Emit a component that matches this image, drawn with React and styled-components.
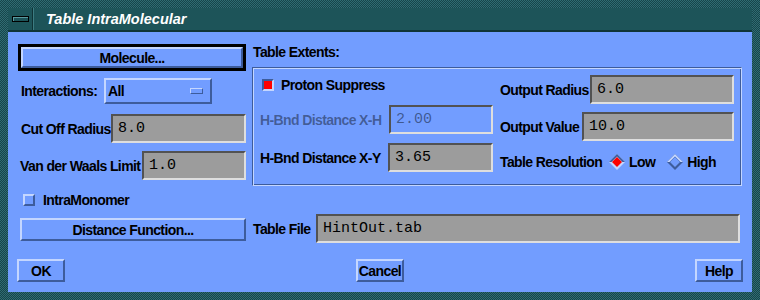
import React from "react";
import styled, { createGlobalStyle, css } from "styled-components";

const BG = "#729dff";
const LIGHT = "#c4d6ff";
const DARK = "#3d5c9c";
const FIELD = "#9c9c9c";
const FIELD_DARK = "#525252";
const FIELD_LIGHT = "#dedede";

const Global = createGlobalStyle`
  body {
    margin: 0;
    background: #000;
  }
`;

const raised = css`
  border: 2px solid;
  border-color: ${LIGHT} ${DARK} ${DARK} ${LIGHT};
`;

const uiText = css`
  font-weight: bold;
  font-size: 14px;
  letter-spacing: -0.6px;
`;

const Window = styled.div`
  width: 760px;
  height: 300px;
  box-sizing: border-box;
  padding: 8px;
  display: flex;
  flex-direction: column;
  background: repeating-conic-gradient(#17454a 0 25%, #2f6b72 0 50%) 0 0 / 2px 2px;
  font-family: "Liberation Sans", Arial, sans-serif;
`;

const TitleBar = styled.div`
  height: 22px;
  display: flex;
  align-items: stretch;
  background: #1d5459;
  border-bottom: 2px solid #103538;
`;

const MenuButton = styled.div`
  width: 24px;
  display: flex;
  align-items: center;
  justify-content: center;
  border-right: 1px solid #0f3336;
  box-shadow: 1px 0 0 #3c7c82;
`;

const MenuBar = styled.div`
  width: 15px;
  height: 4px;
  background: #1d5459;
  border: 1px solid #000;
  box-shadow: inset 1px 1px 0 #5a9aa0;
`;

const Title = styled.div`
  padding-left: 13px;
  display: flex;
  align-items: center;
  color: #fff;
  font-weight: bold;
  font-style: italic;
  font-size: 14.5px;
`;

const Content = styled.div`
  flex: 1;
  background: ${BG};
  padding: 12px 10px 0 10px;
  display: flex;
  flex-direction: column;
`;

const Main = styled.div`
  display: grid;
  grid-template-columns: 228px 490px;
  column-gap: 6px;
`;

const Column = styled.div`
  display: flex;
  flex-direction: column;
`;

const Row = styled.div`
  display: flex;
  align-items: center;
  justify-content: space-between;
  height: ${(p) => p.$h || 29}px;
  margin-top: ${(p) => p.$top || 0}px;
  padding-left: ${(p) => p.$indent || 0}px;
  padding-right: ${(p) => p.$right || 0}px;
`;

const Label = styled.span`
  ${uiText};
  color: ${(p) => (p.$dim ? "rgba(0,0,0,0.42)" : "#000")};
  white-space: nowrap;
  width: ${(p) => (p.$w ? `${p.$w}px` : "auto")};
`;

const DefaultRing = styled.div`
  border: 3px solid #000;
  height: 27px;
  box-sizing: border-box;
  display: flex;
`;

const PushButton = styled.button`
  ${raised};
  ${uiText};
  background: ${BG};
  box-sizing: border-box;
  flex: ${(p) => (p.$fill ? 1 : "none")};
  width: ${(p) => (p.$w ? `${p.$w}px` : "auto")};
  height: ${(p) => p.$h || 23}px;
  margin: 0;
  padding: 0;
  font-family: inherit;
  color: #000;
  display: flex;
  align-items: center;
  justify-content: center;
`;

const OptionMenu = styled.div`
  ${raised};
  ${uiText};
  box-sizing: border-box;
  width: 108px;
  height: 26px;
  margin-right: auto;
  display: flex;
  align-items: center;
  justify-content: space-between;
  padding: 0 7px 0 2px;
`;

const OptionIndicator = styled.div`
  width: 13px;
  height: 6px;
  box-sizing: border-box;
  border: 1px solid;
  border-color: ${LIGHT} ${DARK} ${DARK} ${LIGHT};
`;

const TextField = styled.div`
  box-sizing: border-box;
  width: ${(p) => p.$w}px;
  height: 29px;
  border: 2px solid;
  border-color: ${FIELD_DARK} ${FIELD_LIGHT} ${FIELD_LIGHT} ${FIELD_DARK};
  background: ${(p) => (p.$dim ? BG : FIELD)};
  color: ${(p) => (p.$dim ? "rgba(0,0,0,0.45)" : "#000")};
  padding-left: 5px;
  display: flex;
  align-items: center;
  font-family: "Liberation Mono", "Courier New", monospace;
  font-size: 15px;
`;

const Toggle = styled.span`
  width: 12px;
  height: 12px;
  box-sizing: border-box;
  border: 2px solid;
  border-color: ${(p) =>
    p.$on
      ? `${DARK} ${LIGHT} ${LIGHT} ${DARK}`
      : `${LIGHT} ${DARK} ${DARK} ${LIGHT}`};
  background: ${(p) => (p.$on ? "#ff0000" : BG)};
  flex: none;
`;

const ToggleItem = styled.div`
  display: flex;
  align-items: center;
  gap: ${(p) => p.$gap || 8}px;
  margin-left: ${(p) => p.$left || 0}px;
`;

const SectionTitle = styled.div`
  ${uiText};
  height: 23px;
  padding: 0 0 0 1px;
  box-sizing: border-box;
`;

const Frame = styled.div`
  box-sizing: border-box;
  height: 119px;
  border: 1px solid;
  border-color: ${DARK} ${LIGHT} ${LIGHT} ${DARK};
  box-shadow: inset 1px 1px 0 ${LIGHT}, inset -1px -1px 0 ${DARK};
  padding: 7px 7px 0 7px;
  display: grid;
  grid-template-columns: 233px 234px;
  column-gap: 7px;
`;

const RadioGroup = styled.div`
  display: flex;
  align-items: center;
  width: 125px;
`;

const ButtonBar = styled.div`
  display: flex;
  justify-content: space-between;
  margin: 16px -1px 0 -1px;
`;

function Diamond({ on }) {
  const tl = on ? DARK : LIGHT;
  const br = on ? LIGHT : DARK;
  return (
    <svg width="16" height="16" viewBox="0 0 16 16" style={{ flex: "none" }}>
      <polygon points="8,0 16,8 8,16 0,8" fill={br} />
      <polygon points="8,0 0,8 2.5,8 8,2.5 13.5,8 16,8" fill={tl} />
      <polygon points="8,3 13,8 8,13 3,8" fill={on ? "#ff0000" : BG} />
    </svg>
  );
}

export default function App() {
  return (
    <>
      <Global />
      <Window>
        <TitleBar>
          <MenuButton>
            <MenuBar />
          </MenuButton>
          <Title>Table IntraMolecular</Title>
        </TitleBar>
        <Content>
          <Main>
            <Column>
              <DefaultRing>
                <PushButton $fill $h={21}>Molecule...</PushButton>
              </DefaultRing>
              <Row $top={7} $h={26} $indent={3}>
                <Label $w={83}>Interactions:</Label>
                <OptionMenu>
                  All
                  <OptionIndicator />
                </OptionMenu>
              </Row>
              <Row $top={10} $indent={3}>
                <Label>Cut Off Radius</Label>
                <TextField $w={135}>8.0</TextField>
              </Row>
              <Row $top={8} $indent={2}>
                <Label>Van der Waals Limit</Label>
                <TextField $w={104}>1.0</TextField>
              </Row>
              <Row $top={10} $h={20} $indent={5}>
                <ToggleItem>
                  <Toggle />
                  <Label>IntraMonomer</Label>
                </ToggleItem>
              </Row>
              <Row $top={8} $h={23} $indent={2}>
                <PushButton $fill>Distance Function...</PushButton>
              </Row>
            </Column>

            <Column>
              <SectionTitle>Table Extents:</SectionTitle>
              <Frame>
                <Column>
                  <Row $h={20} $indent={2}>
                    <ToggleItem $gap={7}>
                      <Toggle $on />
                      <Label>Proton Suppress</Label>
                    </ToggleItem>
                  </Row>
                  <Row $top={10}>
                    <Label $dim>H-Bnd Distance X-H</Label>
                    <TextField $w={104} $dim>2.00</TextField>
                  </Row>
                  <Row $top={9}>
                    <Label>H-Bnd Distance X-Y</Label>
                    <TextField $w={105}>3.65</TextField>
                  </Row>
                </Column>
                <Column>
                  <Row>
                    <Label>Output Radius</Label>
                    <TextField $w={144}>6.0</TextField>
                  </Row>
                  <Row $top={8}>
                    <Label>Output Value</Label>
                    <TextField $w={152}>10.0</TextField>
                  </Row>
                  <Row $top={11} $h={20}>
                    <Label $w={109}>Table Resolution</Label>
                    <RadioGroup>
                      <ToggleItem $gap={4}>
                        <Diamond on />
                        <Label>Low</Label>
                      </ToggleItem>
                      <ToggleItem $gap={4} $left={12}>
                        <Diamond />
                        <Label>High</Label>
                      </ToggleItem>
                    </RadioGroup>
                  </Row>
                </Column>
              </Frame>
              <Row $top={28} $indent={1} $right={2}>
                <Label>Table File</Label>
                <TextField $w={424}>HintOut.tab</TextField>
              </Row>
            </Column>
          </Main>
          <ButtonBar>
            <PushButton $w={48}>OK</PushButton>
            <PushButton $w={48}>Cancel</PushButton>
            <PushButton $w={48}>Help</PushButton>
          </ButtonBar>
        </Content>
      </Window>
    </>
  );
}
